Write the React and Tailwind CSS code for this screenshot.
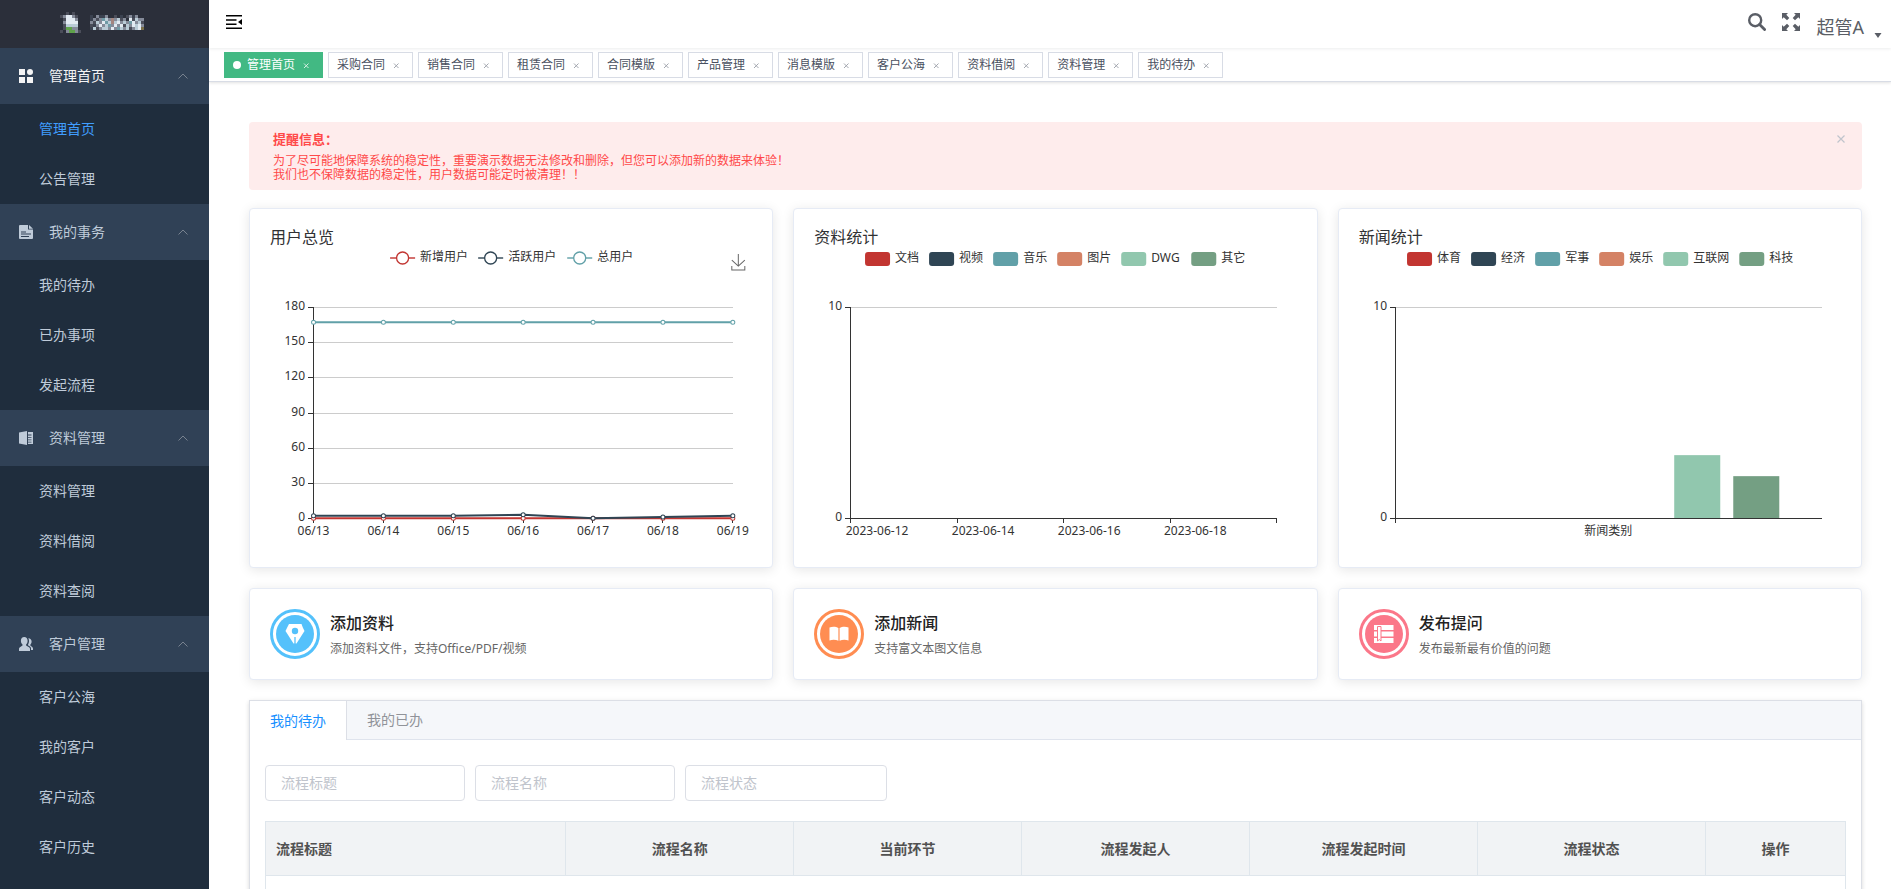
import React, { useState } from 'react';

const BLOCKS = ['#c23531', '#2f4554', '#61a0a8', '#d48265', '#91c7ae', '#749f83'];

const menu = [
  { title: '管理首页', icon: 'grid', items: ['管理首页', '公告管理'] },
  { title: '我的事务', icon: 'doc', items: ['我的待办', '已办事项', '发起流程'] },
  { title: '资料管理', icon: 'book', items: ['资料管理', '资料借阅', '资料查阅'] },
  { title: '客户管理', icon: 'users', items: ['客户公海', '我的客户', '客户动态', '客户历史'] },
];

const tags = ['管理首页', '采购合同', '销售合同', '租赁合同', '合同模版', '产品管理', '消息模版', '客户公海', '资料借阅', '资料管理', '我的待办'];

const columns = ['流程标题', '流程名称', '当前环节', '流程发起人', '流程发起时间', '流程状态', '操作'];

// mosaic logo, one character per 3px cell
const logoRows = [
  '..b.b..',
  'bgwwgb....d.gddg..b.d.bgdg..',
  '.bwwwg....dgbgtcgrgcbg.wbcgg',
  '.gwwww....gbcgwtcrcwgcgtwgcb',
  '.bcccc....bdgwgctgwgwbcgwcwg',
  '.bnngg....dcbgccgwgtcgcbgcwy',
  'b.gnngb',
];
const logoColors = { b: '#4a4d59', d: '#3b4250', w: '#e3ebf2', g: '#858b99', n: '#5fa24a', c: '#b9cbd6', t: '#6f9ba6', r: '#a3857f', y: '#7a6f48' };

const Logo = () => (
  <svg width="90" height="21" viewBox="0 0 90 21" shapeRendering="crispEdges">
    {logoRows.map((row, y) =>
      row.split('').map((c, x) =>
        c === '.' ? null : <rect key={`${x}-${y}`} x={x * 3} y={y * 3} width="3" height="3" fill={logoColors[c]} />
      )
    )}
  </svg>
);

const MenuIcon = ({ name }) => (
  <svg width="14" height="14" viewBox="0 0 14 14" fill="currentColor">
    {name === 'grid' && (
      <>
        <path d="M0 0h6v6H0zM0 8h6v6H0zM8 8h6v6H8z" />
        <circle cx="11" cy="3" r="3" />
      </>
    )}
    {name === 'doc' && (
      <path fillRule="evenodd" d="M1 0h8v4.5h5V13a1 1 0 0 1-1 1H1a1 1 0 0 1-1-1V1a1 1 0 0 1 1-1zM10 0l4 3.7h-4zM2 6.5v1h5v-1zM2 8.5v1h10v-1zM2 11v1h8v-1z" />
    )}
    {name === 'book' && (
      <path fillRule="evenodd" d="M0 1.4 8 0v14l-8-1.4zM9 1h5v12H9v-1.4h3.5v-.8H9V9.2h3.5v-.8H9V6.8h3.5V6H9V4.4h3.5v-.8H9z" />
    )}
    {name === 'users' && (
      <>
        <path d="M5.2 0C7.3 0 8.6 1.6 8.6 3.8c0 1.6-.6 3-1.5 3.8v1l3 1.6c.6.4.9.9.9 1.6V14H0v-2.2c0-.7.3-1.2.9-1.6l2.6-1.6v-1C2.500 6.800 1.900 5.400 1.900 3.800 1.900 1.600 3.200 0 5.200 0z" />
        <path d="M9.300 1.300c2 0 3.300 1.300 3.300 3.200 0 1.400-.5 2.500-1.300 3.200v.9l1.900 1.300c.5.400.8.900.8 1.500V13h-2v-1.500c0-1-.5-1.800-1.400-2.300L9 8.300v-.6c.6-.9 1-2.300 1-3.600 0-1.100-.2-2-.7-2.800z" />
      </>
    )}
  </svg>
);

const Sidebar = () => (
  <aside className="w-[209px] shrink-0 overflow-hidden bg-[#1f2d3d] text-sm text-[#bfcbd9]">
    <div className="flex h-12 items-center justify-center bg-[#2b2f3a] pb-1">
      <Logo />
    </div>
    <nav>
      {menu.map((group, gi) => (
        <div key={group.title}>
          <button className={`flex h-14 w-full items-center bg-[#304156] pr-[21px] pl-[19px] ${gi === 0 ? 'text-[#f4f4f5]' : ''}`}>
            <MenuIcon name={group.icon} />
            <span className="ml-4 flex-1 text-left">{group.title}</span>
            <svg width="10" height="6" viewBox="0 0 10 6" fill="none" stroke="#78828f">
              <path d="M.5 5.500 5 1l4.500 4.500" />
            </svg>
          </button>
          {group.items.map((item, i) => (
            <a key={item} href="#" className={`flex h-[50px] items-center pl-[39px] ${gi === 0 && i === 0 ? 'text-[#409eff]' : ''}`}>
              {item}
            </a>
          ))}
        </div>
      ))}
    </nav>
  </aside>
);

const Navbar = () => (
  <header className="relative flex h-12 items-center justify-between bg-white pr-[9px] pl-[17px] text-[#5a5e66] shadow-[0_1px_3px_rgba(0,21,41,0.08)]">
    <button aria-label="收起菜单" className="pb-1 text-black">
      <svg width="16" height="14" viewBox="0 0 16 14" fill="currentColor">
        <path d="M0 0h16v1.500H0zM0 4.200h10.500v1.500H0zM0 8.400h10.500v1.500H0zM0 12.500h16V14H0zM16 4v6l-4-3z" />
      </svg>
    </button>
    <div className="flex items-center">
      <button aria-label="搜索" className="pb-1">
        <svg width="18" height="18" viewBox="0 0 18 18" fill="none" stroke="currentColor">
          <circle cx="7.200" cy="7.200" r="6" strokeWidth="2.400" />
          <path d="m11.600 11.600 5 5" strokeWidth="2.800" strokeLinecap="round" />
        </svg>
      </button>
      <button aria-label="全屏" className="ml-4 pb-1">
        <svg width="18" height="18" viewBox="0 0 18 18">
          <path fill="currentColor" d="M0 0h6L4.300 1.700 7.300 5 5 7.300 1.700 4.300 0 6zM18 0v6l-1.700-1.700L13 7.300 10.700 5l3-3.300L12 0zM0 18v-6l1.700 1.700L5 10.700 7.300 13l-3 3.300L6 18zM18 18h-6l1.700-1.700-3-3.300 2.300-2.300 3.300 3L18 12z" />
        </svg>
      </button>
      <button className="ml-4 flex items-end pt-1.5 text-lg">
        超管A
        <svg className="ml-2.5" width="8" height="8" viewBox="0 0 8 8">
          <path fill="currentColor" d="M.5 0h7L4 5z" />
        </svg>
      </button>
    </div>
  </header>
);

const TagsView = () => (
  <div className="flex h-[34px] items-center gap-[5px] border-b border-[#d8dce5] bg-white pl-[15px] text-xs text-[#495060] shadow-[0_1px_3px_rgba(0,0,0,0.12)]">
    {tags.map((tag, i) => (
      <a
        key={tag}
        href="#"
        className={`flex h-[26px] shrink-0 items-center border px-2 ${i === 0 ? 'border-[#42b983] bg-[#42b983] text-white' : 'border-[#d8dce5] bg-white'}`}
      >
        {i === 0 && <span className="mr-1.5 size-2 rounded-full bg-white" />}
        {tag}
        <svg className="ml-[3px]" width="16" height="16" viewBox="0 0 16 16" stroke={i === 0 ? '#d5efe2' : '#a4a8b0'}>
          <path d="m6 6.500 4.500 4.500M10.500 6.500 6 11" />
        </svg>
      </a>
    ))}
  </div>
);

const Alert = () => {
  const [open, setOpen] = useState(true);
  if (!open) return null;

  return (
    <div className="flex items-start justify-between rounded bg-[#feecec] py-2 pr-4 pl-6 text-[#ff4949]">
      <div>
        <p className="text-[13px] leading-[18px] font-bold">提醒信息：</p>
        <p className="mt-[6px] text-xs leading-[14px]">
          为了尽可能地保障系统的稳定性，重要演示数据无法修改和删除，但您可以添加新的数据来体验！
          <br />
          我们也不保障数据的稳定性，用户数据可能定时被清理！！
        </p>
      </div>
      <button aria-label="关闭" className="pt-1" onClick={() => setOpen(false)}>
        <svg width="10" height="10" viewBox="0 0 10 10" stroke="#c0c4cc" strokeWidth="1.200">
          <path d="m1.500 1.500 7 7M8.500 1.500l-7 7" />
        </svg>
      </button>
    </div>
  );
};

const Card = ({ children }) => (
  <section className="min-w-0 rounded border border-[#e6ebf5] bg-white p-5 shadow-[0_2px_12px_rgba(0,0,0,0.1)]">{children}</section>
);

const Chart = ({ title, children }) => (
  <Card>
    <h2 className="text-base leading-4 text-[#303133]">{title}</h2>
    <svg className="mt-0.5 block w-full text-xs" viewBox="0 0 482 300" fill="#333">
      {children}
    </svg>
  </Card>
);

const TOP = 60;
const BOTTOM = 271;

const AxisY = ({ x, right, max, step }) => {
  const values = [];
  for (let v = 0; v <= max; v += step) values.push(v);
  return (
    <g>
      {values.map((v) => {
        const y = Math.round(BOTTOM - (v / max) * (BOTTOM - TOP)) + 0.5;
        return (
          <g key={v}>
            {v > 0 && <path d={`M${x} ${y}H${right}`} stroke="#ccc" shapeRendering="crispEdges" />}
            <path d={`M${x - 5} ${y}h5`} stroke="#333" shapeRendering="crispEdges" />
            <text x={x - 8} y={y + 2} textAnchor="end">{v}</text>
          </g>
        );
      })}
      <path d={`M${x + 0.5} ${TOP}V${BOTTOM + 1}`} stroke="#333" shapeRendering="crispEdges" />
    </g>
  );
};

const AxisX = ({ x, right, ticks }) => (
  <path
    d={`M${x} ${BOTTOM + 0.5}H${right + 1}${ticks.map((t) => `M${t + 0.5} ${BOTTOM}v5`).join('')}`}
    stroke="#333"
    shapeRendering="crispEdges"
  />
);

const BlockLegend = ({ items }) =>
  items.map(([label, x], i) => (
    <g key={label}>
      <rect x={x} y="5" width="25" height="14" rx="3" fill={BLOCKS[i]} />
      <text x={x + 30} y="15">{label}</text>
    </g>
  ));

const days = ['06/13', '06/14', '06/15', '06/16', '06/17', '06/18', '06/19'];
const userSeries = [
  { name: '新增用户', color: '#c23531', legendX: 120, data: [0, 0, 0, 0, 0, 0, 0] },
  { name: '活跃用户', color: '#2f4554', legendX: 208, data: [2, 2, 2, 3, 0, 1, 2] },
  { name: '总用户', color: '#61a0a8', legendX: 297, data: [167, 167, 167, 167, 167, 167, 167] },
];

const UserChart = () => {
  const px = (i) => 43.5 + (i * 419) / 6;
  const py = (v) => 271 - (v / 180) * 211;

  return (
    <Chart title="用户总览">
      {userSeries.map((s) => (
        <g key={s.name}>
          <path d={`M${s.legendX} 11h25`} stroke={s.color} strokeWidth="2" opacity="0.7" />
          <circle cx={s.legendX + 12.5} cy="11" r="6" fill="#fff" stroke={s.color} strokeWidth="1.300" />
          <text x={s.legendX + 30} y="14">{s.name}</text>
        </g>
      ))}
      <path d="M468 7v12M461.500 13l6.500 6 6.500-6M461.500 19v4h13v-4" fill="none" stroke="#666" />
      <AxisY x={43} right={463} max={180} step={30} />
      <AxisX x={43} right={462} ticks={days.map((_, i) => Math.round(px(i) - 0.5))} />
      {userSeries.map((s) => (
        <g key={s.name} stroke={s.color}>
          <polyline points={s.data.map((v, i) => `${px(i)},${py(v)}`).join(' ')} fill="none" strokeWidth="2" />
          {s.data.map((v, i) => (
            <circle key={i} cx={px(i)} cy={py(v)} r="2" fill="#fff" />
          ))}
        </g>
      ))}
      {days.map((d, i) => (
        <text key={d} x={px(i)} y="288" textAnchor="middle">{d}</text>
      ))}
    </Chart>
  );
};

const FileChart = () => (
  <Chart title="资料统计">
    <BlockLegend items={[['文档', 51], ['视频', 115], ['音乐', 179], ['图片', 243], ['DWG', 307], ['其它', 377]]} />
    <AxisY x={36} right={463} max={10} step={10} />
    <AxisX x={36} right={462} ticks={[36, 143, 249, 356, 462]} />
    {['2023-06-12', '2023-06-14', '2023-06-16', '2023-06-18'].map((d, i) => (
      <text key={d} x={63 + i * 106} y="288" textAnchor="middle">{d}</text>
    ))}
  </Chart>
);

const NewsChart = () => (
  <Chart title="新闻统计">
    <BlockLegend items={[['体育', 48], ['经济', 112], ['军事', 176], ['娱乐', 240], ['互联网', 304], ['科技', 380]]} />
    <AxisY x={36} right={463} max={10} step={10} />
    <rect x="315" y="208" width="46" height="63" fill={BLOCKS[4]} />
    <rect x="374" y="229" width="46" height="42" fill={BLOCKS[5]} />
    <AxisX x={36} right={462} ticks={[36]} />
    <text x="249" y="288" textAnchor="middle">新闻类别</text>
  </Chart>
);

const shortcuts = [
  {
    title: '添加资料',
    desc: '添加资料文件，支持Office/PDF/视频',
    color: '#54c1fb',
    glyph: (
      <>
        <path fill="#fff" d="M19 15h12.500l1.300 3.500L34.500 22 26.500 34.500h-3L15.500 22l1.700-3.500z" />
        <circle cx="25" cy="22" r="3.200" fill="#54c1fb" />
        <path d="M25 28v7" stroke="#54c1fb" strokeWidth="1.300" />
      </>
    ),
  },
  {
    title: '添加新闻',
    desc: '支持富文本图文信息',
    color: '#ff8d52',
    glyph: (
      <path fill="#fff" d="M15.500 18.500c3-1.200 6.500-1 8.900.6v12.700c-2.400-1.300-5.900-1.400-8.900-.4zM34.500 18.500c-3-1.200-6.500-1-8.900.6v12.700c2.400-1.300 5.900-1.400 8.900-.4z" />
    ),
  },
  {
    title: '发布提问',
    desc: '发布最新最有价值的问题',
    color: '#fb7789',
    glyph: (
      <>
        <path fill="#fff" d="M15 16h19.500v5H15zM15 22.500h19.500v5H15zM15 29h19.500v5H15z" />
        <path fill="#fff" stroke="#fb7789" d="M18.500 17.500h3.500v14.500l-1.700-1.500-1.800 1.500z" />
      </>
    ),
  },
];

const Shortcut = ({ title, desc, color, glyph }) => (
  <Card>
    <a href="#" className="flex gap-2.5">
      <svg className="shrink-0" width="50" height="50" viewBox="0 0 50 50">
        <circle cx="25" cy="25" r="23.500" fill="#fff" stroke={color} strokeWidth="3" />
        <circle cx="25" cy="25" r="19" fill={color} />
        {glyph}
      </svg>
      <div className="pt-0.5">
        <h3 className="text-base leading-6 font-medium text-[#222]">{title}</h3>
        <p className="mt-1 text-xs leading-5 text-[#666]">{desc}</p>
      </div>
    </a>
  </Card>
);

const filterInput = 'h-9 rounded border border-[#dcdfe6] px-[15px] pb-0.5 text-sm outline-none placeholder:text-[#c0c4cc]';

const TodoPanel = () => (
  <section className="border border-[#dcdfe6] bg-white shadow-[0_2px_4px_rgba(0,0,0,0.12),0_0_6px_rgba(0,0,0,0.04)]">
    <div className="flex h-[39px] bg-[#f5f7fa] text-sm">
      <button className="border-r border-[#dcdfe6] bg-white px-5 text-[#1890ff]">我的待办</button>
      <button className="flex-1 border-b border-[#dfe4ed] px-5 text-left text-[#909399]">我的已办</button>
    </div>
    <div className="p-[15px] pt-[25px]">
      <div className="flex gap-2.5">
        <input className={`w-[200px] ${filterInput}`} placeholder="流程标题" aria-label="流程标题" />
        <input className={`w-[200px] ${filterInput}`} placeholder="流程名称" aria-label="流程名称" />
        <input className={`w-[202px] ${filterInput}`} placeholder="流程状态" aria-label="流程状态" />
      </div>
      <table className="mt-5 w-full table-fixed border-collapse border border-[#dfe6ec] text-sm">
        <colgroup>
          <col className="w-[19%]" />
          <col />
          <col />
          <col />
          <col />
          <col />
          <col className="w-[140px]" />
        </colgroup>
        <thead>
          <tr className="h-[54px] bg-[#f1f3f5]">
            {columns.map((c, i) => (
              <th key={c} className={`border border-[#dfe6ec] px-2.5 font-bold text-[#515151] ${i === 0 ? 'text-left' : 'text-center'}`}>
                {c}
              </th>
            ))}
          </tr>
        </thead>
        <tbody>
          <tr className="h-[60px]">
            <td colSpan={7} />
          </tr>
        </tbody>
      </table>
    </div>
  </section>
);

const App = () => (
  <div className="flex h-screen overflow-hidden bg-white font-['Noto_Sans','Noto_Sans_CJK_SC',sans-serif]">
    <Sidebar />
    <div className="min-w-0 flex-1">
      <Navbar />
      <TagsView />
      <main className="pt-10 pr-[29px] pl-10">
        <Alert />
        <div className="mt-[18px] grid grid-cols-3 gap-5">
          <UserChart />
          <FileChart />
          <NewsChart />
          {shortcuts.map((s) => (
            <Shortcut key={s.title} {...s} />
          ))}
        </div>
        <div className="mt-5">
          <TodoPanel />
        </div>
      </main>
    </div>
  </div>
);

export default App;
